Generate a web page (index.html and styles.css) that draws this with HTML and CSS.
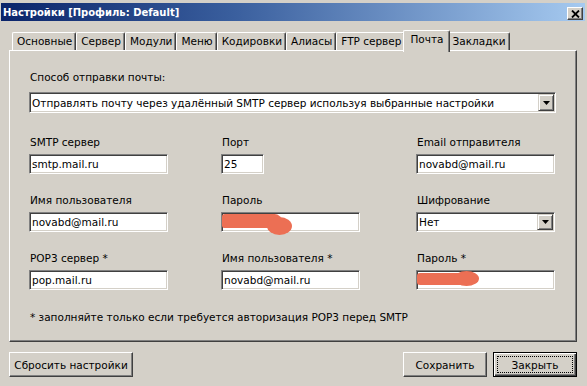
FILE: index.html
```html
<!DOCTYPE html>
<html lang="ru">
<head>
  <meta charset="UTF-8">
  <title>Настройки</title>
  <link rel="stylesheet" href="styles.css">
</head>
<body>
  <div class="window">
    <div class="titlebar">
      <span class="title">Настройки [Профиль: Default]</span>
      <span class="close-btn">
        <svg width="9" height="8" viewBox="0 0 9 8"><path d="M1 0.5 L8 7.5 M8 0.5 L1 7.5" stroke="#000" stroke-width="1.8" fill="none"/></svg>
      </span>
    </div>

    <div class="tabs">
      <div class="tab">Основные</div>
      <div class="tab">Сервер</div>
      <div class="tab">Модули</div>
      <div class="tab">Меню</div>
      <div class="tab">Кодировки</div>
      <div class="tab">Алиасы</div>
      <div class="tab">FTP сервер</div>
      <div class="tab active">Почта</div>
      <div class="tab">Закладки</div>
    </div>

    <div class="panel">
      <div class="label">Способ отправки почты:</div>
      <div class="combo combo-wide">
        <span class="combo-text">Отправлять почту через удалённый SMTP сервер используя выбранные настройки</span>
        <span class="drop"><svg width="7" height="4" viewBox="0 0 7 4"><path d="M0 0 H7 L3.5 4 Z" fill="#000"/></svg></span>
      </div>

      <div class="fields">
        <div class="field">
          <div class="label">SMTP сервер</div>
          <div class="input">smtp.mail.ru</div>
        </div>
        <div class="field">
          <div class="label">Порт</div>
          <div class="input input-short">25</div>
        </div>
        <div class="field">
          <div class="label">Email отправителя</div>
          <div class="input">novabd@mail.ru</div>
        </div>

        <div class="field">
          <div class="label">Имя пользователя</div>
          <div class="input">novabd@mail.ru</div>
        </div>
        <div class="field">
          <div class="label">Пароль</div>
          <div class="input">
            <span class="blob blob-band1"></span>
            <span class="blob blob-lump1"></span>
          </div>
        </div>
        <div class="field">
          <div class="label">Шифрование</div>
          <div class="combo">
            <span class="combo-text">Нет</span>
            <span class="drop"><svg width="7" height="4" viewBox="0 0 7 4"><path d="M0 0 H7 L3.5 4 Z" fill="#000"/></svg></span>
          </div>
        </div>

        <div class="field">
          <div class="label">POP3 сервер *</div>
          <div class="input">pop.mail.ru</div>
        </div>
        <div class="field">
          <div class="label">Имя пользователя *</div>
          <div class="input">novabd@mail.ru</div>
        </div>
        <div class="field">
          <div class="label">Пароль *</div>
          <div class="input">
            <span class="blob blob-band2"></span>
            <span class="blob blob-lump2"></span>
          </div>
        </div>
      </div>

      <div class="note">* заполняйте только если требуется авторизация POP3 перед SMTP</div>
    </div>

    <div class="buttons">
      <button class="btn btn-reset">Сбросить настройки</button>
      <span class="spacer"></span>
      <button class="btn">Сохранить</button>
      <button class="btn btn-default">Закрыть</button>
    </div>
  </div>
</body>
</html>
```

FILE: styles.css
```css
body {
  margin: 0;
  width: 587px;
  height: 386px;
  overflow: hidden;
  background: #d4d0c8;
  font-family: 'DejaVu Sans', Arial, sans-serif;
  font-size: 10.5px;
  color: #000;
}
.window {
  padding: 3px 2px 0 1px;
}
/* заголовок окна */
.titlebar {
  height: 18px;
  display: flex;
  align-items: center;
  background: linear-gradient(to right, #0a246a 0%, #3a5f9e 40%, #a6caf0 100%);
}
.title {
  flex: 1;
  padding-left: 2px;
  color: #fff;
  font-weight: bold;
  font-size: 10px;
}
.close-btn {
  width: 16px;
  height: 13px;
  margin: 3px 2px 0 0;
  box-sizing: border-box;
  display: flex;
  align-items: center;
  justify-content: center;
  background: #d4d0c8;
  border: 1px solid;
  border-color: #fff #404040 #404040 #fff;
  box-shadow: inset -1px -1px #808080;
}
/* вкладки */
.tabs {
  display: flex;
  align-items: flex-end;
  margin: 9px 0 0 11px;
  height: 20px;
}
.tab {
  height: 18px;
  box-sizing: border-box;
  padding: 0 3px 0 4px;
  line-height: 16px;
  border-top: 1px solid #fff;
  border-left: 1px solid #fff;
  border-right: 1px solid #404040;
  border-radius: 2px 2px 0 0;
  box-shadow: inset -1px 0 #808080;
  white-space: nowrap;
}
.active {
  height: 22px;
  margin: 0 -2px -2px -2px;
  padding: 0 5px 0 6px;
  line-height: 17px;
  position: relative;
  z-index: 1;
  background: #d4d0c8;
}
/* панель */
.panel {
  margin-left: 8px;
  width: 568px;
  height: 292px;
  box-sizing: border-box;
  padding: 19px;
  border-top: 1px solid #fff;
  border-left: 1px solid #fff;
  border-right: 1px solid #404040;
  border-bottom: 1px solid #404040;
  box-shadow: inset -1px -1px #808080;
}
.label {
  line-height: 14px;
  height: 14px;
  white-space: nowrap;
  padding-left: 1px;
}
.input, .combo {
  position: relative;
  height: 20px;
  width: 139px;
  box-sizing: border-box;
  background: #fff;
  border: 1px solid;
  border-color: #808080 #fff #fff #808080;
  box-shadow: inset 1px 1px #404040, inset -1px -1px #d4d0c8;
  padding-left: 2px;
  line-height: 18px;
  white-space: nowrap;
}
.input-short {
  width: 43px;
}
.combo {
  display: flex;
  align-items: center;
}
.combo-wide {
  width: 527px;
  height: 21px;
  margin-top: 8px;
}
.combo-text {
  flex: 1;
}
.drop {
  width: 16px;
  height: 16px;
  margin-right: 1px;
  box-sizing: border-box;
  display: flex;
  align-items: center;
  justify-content: center;
  background: #d4d0c8;
  border: 1px solid;
  border-color: #d4d0c8 #404040 #404040 #d4d0c8;
  box-shadow: inset 1px 1px #fff, inset -1px -1px #808080;
}
.combo-wide .drop {
  height: 17px;
}
.fields {
  display: grid;
  grid-template-columns: 192px 195px 139px;
  row-gap: 19px;
  margin-top: 22px;
}
.field .input, .field .combo {
  margin-top: 5px;
}
/* закрашенные пароли */
.blob {
  position: absolute;
  background: #ec6f54;
}
.blob-band1 {
  left: 0;
  top: 1px;
  width: 60px;
  height: 14px;
  border-radius: 3px 8px 7px 3px;
}
.blob-lump1 {
  left: 45px;
  top: 4px;
  width: 25px;
  height: 18px;
  border-radius: 50%;
}
.blob-band2 {
  left: 0;
  top: 2px;
  width: 50px;
  height: 12px;
  border-radius: 3px 6px 6px 3px;
}
.blob-lump2 {
  left: 37px;
  top: 0;
  width: 25px;
  height: 15px;
  border-radius: 50%;
}
.note {
  margin-top: 20px;
  line-height: 14px;
  padding-left: 1px;
}
/* кнопки */
.buttons {
  display: flex;
  gap: 6px;
  margin: 10px 0 0 8px;
  width: 568px;
}
.spacer {
  flex: 1;
}
.btn {
  position: relative;
  width: 84px;
  height: 25px;
  padding: 0;
  font-family: 'DejaVu Sans', Arial, sans-serif;
  font-size: 10.5px;
  color: #000;
  background: #d4d0c8;
  border: 1px solid;
  border-color: #fff #404040 #404040 #fff;
  box-shadow: inset -1px -1px #808080;
  border-radius: 0;
}
.btn-reset {
  width: 124px;
}
.btn-default {
  border-color: #000;
  box-shadow: inset 1px 1px #fff, inset -1px -1px #404040, inset -2px -2px #808080;
}
.btn-default::after {
  content: "";
  position: absolute;
  left: 3px;
  top: 3px;
  right: 3px;
  bottom: 3px;
  border: 1px dotted #000;
}
```
